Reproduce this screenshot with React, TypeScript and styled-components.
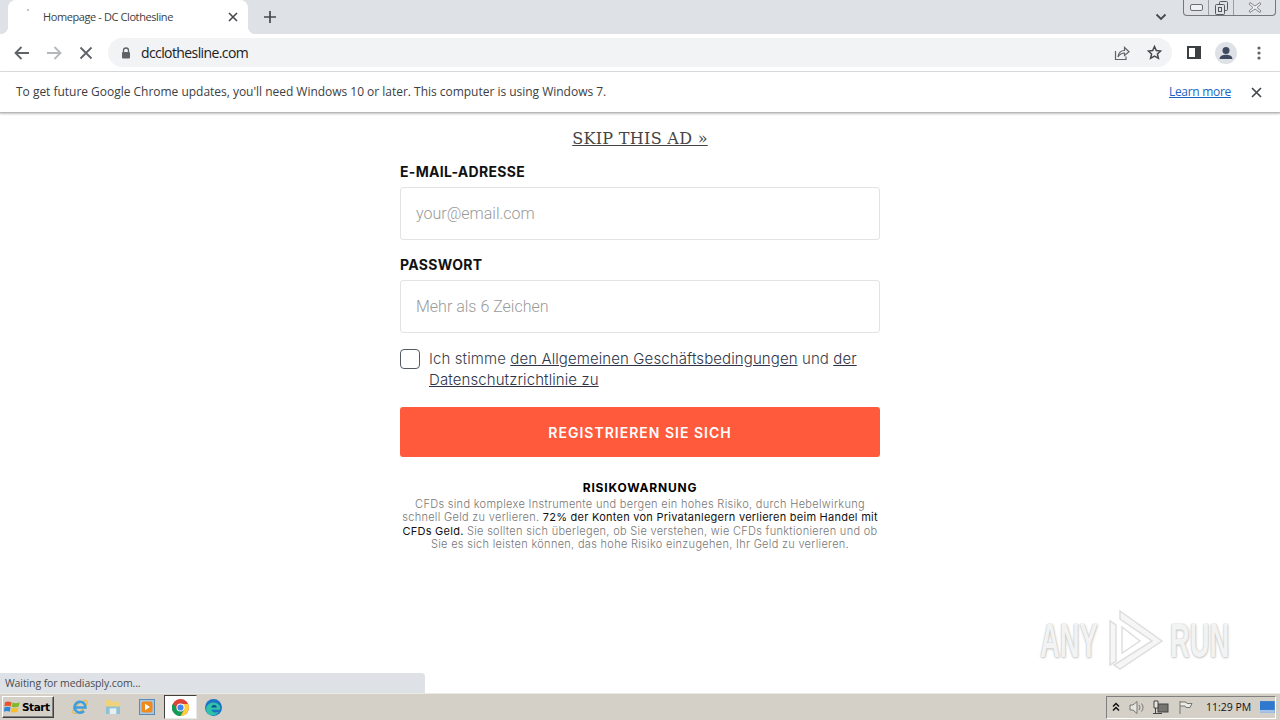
import styled, { createGlobalStyle } from "styled-components"

const GlobalStyle = createGlobalStyle`
    html, body {
        margin: 0;
        padding: 0;
        height: 100%;
        background: #fff;
        overflow: hidden;
    }
    #root { height: 100%; }
    * { box-sizing: border-box; }
`;

const Screen = styled.div`
    position: relative;
    width: 1280px;
    height: 720px;
    display: flex;
    flex-direction: column;
    font-family: "Open Sans", "Liberation Sans", sans-serif;
    overflow: hidden;
`;

/* ---------- browser chrome ---------- */

const TabStrip = styled.div`
    height: 34px;
    flex: none;
    background: #dee1e6;
    display: flex;
    align-items: flex-end;
    padding-left: 8px;
    position: relative;
`;

const Tab = styled.div`
    width: 240px;
    height: 34px;
    background: #fff;
    border-radius: 8px 8px 0 0;
    display: flex;
    align-items: center;
    padding: 0 10px 0 35px;
    position: relative;

    &::before, &::after {
        content: "";
        position: absolute;
        bottom: 0;
        width: 8px;
        height: 8px;
    }
    &::before {
        left: -8px;
        background: radial-gradient(circle at 0 0, #dee1e6 8px, #fff 8.5px);
    }
    &::after {
        right: -8px;
        background: radial-gradient(circle at 100% 0, #dee1e6 8px, #fff 8.5px);
    }
`;

const Favicon = styled.span`
    position: absolute;
    left: 19px;
    top: 9px;
    width: 2px;
    height: 2px;
    background: #c4c4c4;
`;

const TabTitle = styled.span`
    flex: 1;
    margin-bottom: 2px;
    font-size: 11px;
    letter-spacing: -0.4px;
    color: #3c4043;
`;

const NewTab = styled.div`
    width: 26px;
    height: 34px;
    margin-left: 9px;
    display: flex;
    align-items: center;
    justify-content: center;
`;

const TabMenu = styled.div`
    position: absolute;
    left: 1153px;
    top: 10px;
    width: 16px;
    height: 14px;
    display: flex;
    align-items: center;
    justify-content: center;
`;

const WindowButtons = styled.div`
    position: absolute;
    left: 1183px;
    top: 0;
    width: 93px;
    height: 16px;
    border: 1px solid #74777c;
    border-top: none;
    border-radius: 0 0 4px 4px;
    display: grid;
    grid-template-columns: 25px 25px 1fr;
`;

const WindowButton = styled.div<{ $divider?: boolean }>`
    display: flex;
    align-items: center;
    justify-content: center;
    border-right: ${(p) => (p.$divider ? "1px solid #9a9da2" : "none")};
`;

const Toolbar = styled.div`
    height: 38px;
    flex: none;
    background: #fff;
    display: flex;
    align-items: center;
    padding-left: 6px;
    border-bottom: 1px solid #dadce0;
`;

const NavButton = styled.div`
    width: 32px;
    height: 32px;
    display: flex;
    align-items: center;
    justify-content: center;
`;

const Omnibox = styled.div`
    width: 1064px;
    height: 29px;
    margin-left: 6px;
    border-radius: 15px;
    background: #f1f3f4;
    display: flex;
    align-items: center;
    padding: 0 2px 0 13px;
`;

const Url = styled.span`
    flex: 1;
    margin-left: 10px;
    font-size: 14px;
    letter-spacing: -0.6px;
    color: #202124;
`;

const OmniIcon = styled.div`
    width: 32px;
    display: flex;
    justify-content: center;
`;

const ToolIcons = styled.div`
    display: flex;
    align-items: center;
    margin-left: 5px;
`;

const ToolIcon = styled.div<{ $w: number }>`
    width: ${(p) => p.$w}px;
    height: 28px;
    display: flex;
    align-items: center;
    justify-content: center;
`;

const Avatar = styled.div`
    width: 22px;
    height: 22px;
    border-radius: 50%;
    background: #dee1e6;
    display: flex;
    align-items: center;
    justify-content: center;
    overflow: hidden;
`;

const InfoBar = styled.div`
    height: 41px;
    flex: none;
    background: #fff;
    display: flex;
    align-items: center;
    padding: 0 18px 0 16px;
    border-bottom: 1px solid #b8b8b8;
    box-shadow: 0 1px 2px rgba(0, 0, 0, 0.25);
    position: relative;
    z-index: 1;
`;

const InfoText = styled.span`
    flex: 1;
    margin-bottom: 2px;
    font-size: 12px;
    letter-spacing: -0.02px;
    color: #3c4043;
`;

const LearnMore = styled.a`
    margin-bottom: 2px;
    margin-right: 20px;
    font-size: 12px;
    letter-spacing: -0.3px;
    color: #1a63c4;
    text-decoration: underline;
`;

/* ---------- page ---------- */

const Page = styled.main`
    flex: 1;
    background: #fff;
    display: flex;
    flex-direction: column;
    align-items: center;
    padding-top: 16px;
`;

const SkipLink = styled.a`
    font-family: "DejaVu Serif", "Liberation Serif", serif;
    font-size: 16px;
    line-height: 20px;
    letter-spacing: 0.3px;
    color: #444;
    text-decoration: underline;
    margin-bottom: 14px;
`;

const Form = styled.form`
    width: 480px;
    display: flex;
    flex-direction: column;
`;

const FieldLabel = styled.label`
    font-family: Inter, sans-serif;
    font-size: 14px;
    line-height: 18px;
    font-weight: 700;
    letter-spacing: 0.3px;
    color: #111;
    margin-bottom: 6px;
`;

const FieldBox = styled.div`
    height: 53px;
    border: 1px solid #e3e3e3;
    border-radius: 3px;
    padding: 0 15px;
    display: flex;
    align-items: center;
    font-family: Roboto, sans-serif;
    font-weight: 300;
    font-size: 16px;
    color: #9a9a9a;
    margin-bottom: 16px;
`;

const AgreeRow = styled.div`
    display: flex;
    gap: 9px;
    margin-bottom: 16px;
`;

const Checkbox = styled.span`
    flex: none;
    width: 20px;
    height: 20px;
    border: 1px solid #555b66;
    border-radius: 4px;
    background: #fff;
`;

const AgreeText = styled.p`
    margin: -1px 0 1px;
    font-family: Inter, sans-serif;
    font-weight: 300;
    font-size: 15px;
    line-height: 21px;
    letter-spacing: 0.1px;
    color: #3a3f4d;
    & a {
        color: #2e3448;
        text-decoration: underline;
    }
`;

const SubmitButton = styled.div`
    height: 50px;
    border-radius: 3px;
    background: #ff5a3c;
    color: #fff;
    display: flex;
    align-items: center;
    justify-content: center;
    font-family: Inter, sans-serif;
    font-size: 14px;
    font-weight: 600;
    letter-spacing: 1px;
`;

const RiskBlock = styled.section`
    margin-top: 24px;
    text-align: center;
`;

const RiskTitle = styled.h4`
    margin: 0 0 3px;
    font-family: Inter, sans-serif;
    font-size: 12px;
    line-height: 14px;
    font-weight: 700;
    letter-spacing: 0.8px;
    color: #000;
`;

const RiskText = styled.p`
    margin: 0;
    font-family: Inter, sans-serif;
    font-weight: 300;
    font-size: 11px;
    line-height: 13.3px;
    letter-spacing: 0.3px;
    color: #777;
    & b {
        font-weight: 400;
        letter-spacing: 0.25px;
        color: #111;
    }
`;

/* ---------- overlays ---------- */

const StatusBubble = styled.div`
    position: absolute;
    left: 0;
    bottom: 27px;
    width: 425px;
    height: 20px;
    background: #dee1e6;
    border-radius: 0 4px 0 0;
    display: flex;
    align-items: center;
    padding-left: 5px;
    font-size: 10.5px;
    letter-spacing: -0.1px;
    color: #4a4d52;
`;

const Watermark = styled.div`
    position: absolute;
    left: 1040px;
    top: 608px;
    height: 64px;
    width: 192px;
    display: flex;
    align-items: center;
    justify-content: space-between;
`;

const WatermarkWord = styled.span`
    width: 62px;
    font-family: "Liberation Sans", sans-serif;
    font-weight: 700;
    font-size: 48px;
    color: #f3f3f3;
    text-shadow: 0 0 2px #b8b8b8, 1px 1px 3px #c8c8c8;
    display: inline-block;
    transform: scaleX(0.57);
    transform-origin: left center;
    white-space: nowrap;
`;

/* ---------- taskbar ---------- */

const Taskbar = styled.footer`
    height: 27px;
    flex: none;
    background: #d4d0c8;
    border-top: 1px solid #eceae4;
    display: flex;
    align-items: center;
    padding-left: 2px;
`;

const StartButton = styled.div`
    width: 52px;
    height: 22px;
    background: #d4d0c8;
    border: 1px solid;
    border-color: #fff #404040 #404040 #fff;
    box-shadow: inset -1px -1px 0 #808080;
    display: flex;
    align-items: center;
    gap: 1px;
    padding-left: 1px;
    font-family: "DejaVu Sans", sans-serif;
    font-weight: 700;
    font-size: 10.5px;
    letter-spacing: -0.45px;
    color: #000;
`;

const QuickLaunch = styled.div`
    display: flex;
    align-items: center;
    margin-left: 9px;
    flex: 1;
`;

const TaskIcon = styled.div<{ $active?: boolean }>`
    width: 33.5px;
    height: 24px;
    display: flex;
    align-items: center;
    justify-content: center;
    background: ${(p) => (p.$active ? "#fff" : "transparent")};
    border: ${(p) => (p.$active ? "1px solid" : "none")};
    border-color: #404040 #e8e8e8 #e8e8e8 #404040;
`;

const Tray = styled.div`
    width: 170px;
    height: 23px;
    margin-right: 4px;
    border: 1px solid;
    border-color: #808080 #fff #fff #808080;
    display: flex;
    align-items: center;
    padding-left: 4px;
`;

const TraySlot = styled.div<{ $w: number }>`
    width: ${(p) => p.$w}px;
    flex: none;
    display: flex;
    align-items: center;
    justify-content: center;
`;

const Clock = styled.span`
    width: 48px;
    margin: 0 8px 0 4px;
    text-align: center;
    white-space: nowrap;
    font-family: "Open Sans", sans-serif;
    font-size: 10.5px;
    color: #111;
`;

function ChromeLogo() {
    return (
        <svg width="17" height="17" viewBox="0 0 16 16">
            <circle cx="8" cy="8" r="8" fill="#db4437" />
            <path d="M8 8 1 12.2A8 8 0 0 1 1.1 4L4.5 9.5Z" fill="#0f9d58" />
            <path d="M1 12A8 8 0 0 0 8 16L11.5 9.5 8 8Z" fill="#0f9d58" />
            <path d="M8 16A8 8 0 0 0 15.2 4.6H8L11.5 10Z" fill="#ffcd40" />
            <circle cx="8" cy="8" r="3.8" fill="#fff" />
            <circle cx="8" cy="8" r="2.9" fill="#4285f4" />
        </svg>
    );
}

function EdgeLogo() {
    return (
        <svg width="17" height="17" viewBox="0 0 16 16">
            <circle cx="8" cy="8" r="8" fill="#1b73c6" />
            <path d="M1 9C2 4 7 2 11 4 14 5.500 15 8 14 10H6C6.500 12.500 10 13.500 13 12 11 15.500 6 16.500 3 14 1.500 12.800 1 11 1 9Z" fill="#2fc2a8" />
            <path d="M6 8C6 6 8 5 10 6 11 6.500 11.200 7.500 11 8Z" fill="#0d4f94" />
        </svg>
    );
}

function IeLogo() {
    return (
        <svg width="18" height="18" viewBox="0 0 18 18">
            <ellipse cx="9" cy="9" rx="9" ry="3.500" transform="rotate(-40 9 9)" fill="none" stroke="#e8b93a" strokeWidth="1.200" />
            <path d="M3.800 9.500H14.500A5.500 5.500 0 1 0 13 13" fill="none" stroke="#3f9ee0" strokeWidth="2.600" />
        </svg>
    );
}

function FolderLogo() {
    return (
        <svg width="16" height="16" viewBox="0 0 17 17">
            <path d="M1 1H7L8 3H16V16H1Z" fill="#f0d27a" />
            <rect x="1" y="8" width="15" height="8" fill="#8fc1d6" />
            <rect x="5" y="10" width="7" height="6" fill="#e8eef0" />
        </svg>
    );
}

function PlayerLogo() {
    return (
        <svg width="16" height="16" viewBox="0 0 16 16">
            <rect x="0.500" y="0.500" width="15" height="15" fill="#a9c6e0" stroke="#5d8ab5" />
            <rect x="2.500" y="2.500" width="11" height="11" rx="2" fill="#ef8a1d" />
            <path d="M6 4.800 11 8 6 11.200Z" fill="#fff" />
        </svg>
    );
}

function WindowsFlag() {
    return (
        <svg width="17" height="16" viewBox="0 0 18 16">
            <path d="M1 3C3 1.800 5 1.800 8 3L7 7.500C5 6.500 3 6.500 0.500 7.500Z" fill="#e8552a" />
            <path d="M9 3.200C11.500 4.300 13.500 4.200 16.500 3L15.500 7.500C13 8.500 10.500 8.500 8 7.700Z" fill="#7db928" />
            <path d="M0.300 8.500C3 7.500 5 7.500 7 8.500L6 13C4 12 2 12 0 13Z" fill="#2f87d8" />
            <path d="M8 8.800C10 9.600 12.500 9.600 15.300 8.500L14.300 13C12 14 9.500 14 7 13.200Z" fill="#f5c02c" />
        </svg>
    );
}

function AnyRunMark() {
    return (
        <svg width="56" height="62" viewBox="0 0 56 62">
            <g fill="#f6f6f6" stroke="#dedede" strokeWidth="1.500">
                <path d="M2 12V56L8 52V16Z" />
                <path d="M12 2 54 32 12 60 6 56 44 32 12 10Z" />
                <path d="M14 18 32 32 14 44Z" fill="#fff" />
            </g>
        </svg>
    );
}

export default function App() {
    return (
        <>
            <GlobalStyle />
            <Screen>
                <TabStrip>
                    <Tab>
                        <Favicon />
                        <TabTitle>Homepage - DC Clothesline</TabTitle>
                        <svg width="10" height="10" viewBox="0 0 10 10">
                            <path d="M1 1 9 9M9 1 1 9" stroke="#45484c" strokeWidth="1.600" />
                        </svg>
                    </Tab>
                    <NewTab>
                        <svg width="12" height="12" viewBox="0 0 12 12">
                            <path d="M6 0V12M0 6H12" stroke="#45484c" strokeWidth="1.700" />
                        </svg>
                    </NewTab>
                    <TabMenu>
                        <svg width="12" height="8" viewBox="0 0 12 8">
                            <path d="M1.500 1.500 6 6 10.500 1.500" fill="none" stroke="#45484c" strokeWidth="1.800" />
                        </svg>
                    </TabMenu>
                    <WindowButtons>
                        <WindowButton $divider>
                            <svg width="13" height="7" viewBox="0 0 13 7">
                                <rect x="0.500" y="0.500" width="12" height="6" rx="1.500" fill="#eef0f3" stroke="#6b6e73" />
                            </svg>
                        </WindowButton>
                        <WindowButton $divider>
                            <svg width="13" height="14" viewBox="0 0 13 14">
                                <rect x="4.500" y="0.500" width="8" height="9" rx="1" fill="#dee1e6" stroke="#55585c" />
                                <rect x="0.500" y="3.500" width="9" height="10" rx="1" fill="#dee1e6" stroke="#55585c" />
                                <rect x="3.500" y="6.500" width="3" height="4" fill="none" stroke="#55585c" />
                            </svg>
                        </WindowButton>
                        <WindowButton>
                            <svg width="14" height="11" viewBox="0 0 14 11">
                                <path d="M2 0.500 7 4 12 0.500 13 2 9 5.500 13 9 12 10.500 7 7 2 10.500 1 9 5 5.500 1 2Z" fill="#eef0f3" stroke="#6b6e73" strokeWidth="0.800" />
                            </svg>
                        </WindowButton>
                    </WindowButtons>
                </TabStrip>

                <Toolbar>
                    <NavButton>
                        <svg width="16" height="14" viewBox="0 0 16 14">
                            <path d="M15 7H2M7.500 1 1.500 7 7.500 13" fill="none" stroke="#5f6368" strokeWidth="1.800" />
                        </svg>
                    </NavButton>
                    <NavButton>
                        <svg width="16" height="14" viewBox="0 0 16 14">
                            <path d="M1 7H14M8.500 1 14.500 7 8.500 13" fill="none" stroke="#b4b7bb" strokeWidth="1.800" />
                        </svg>
                    </NavButton>
                    <NavButton>
                        <svg width="14" height="14" viewBox="0 0 14 14">
                            <path d="M1.500 1.500 12.500 12.500M12.500 1.500 1.500 12.500" stroke="#5f6368" strokeWidth="1.800" />
                        </svg>
                    </NavButton>
                    <Omnibox>
                        <svg width="10" height="12" viewBox="0 0 10 12">
                            <path d="M2.500 5V3.500a2.500 2.500 0 0 1 5 0V5" fill="none" stroke="#5f6368" strokeWidth="1.300" />
                            <rect x="1" y="5" width="8" height="6.500" rx="1" fill="#5f6368" />
                        </svg>
                        <Url>dcclothesline.com</Url>
                        <OmniIcon>
                            <svg width="16" height="16" viewBox="0 0 16 16">
                                <path d="M1.500 6V14.500H12V11.500" fill="none" stroke="#5f6368" strokeWidth="1.200" />
                                <path d="M4 12C4.500 8 7 5.500 10.500 5.500V2.500L15 6.800 10.500 10.500V8C8 8 5.500 9.500 4 12Z" fill="none" stroke="#5f6368" strokeWidth="1.200" />
                            </svg>
                        </OmniIcon>
                        <OmniIcon>
                            <svg width="15" height="15" viewBox="0 0 15 15">
                                <path d="M7.500 1.500 9.300 5.500 13.700 6 10.400 8.900 11.400 13.300 7.500 11 3.600 13.300 4.600 8.900 1.300 6 5.700 5.500Z" fill="none" stroke="#45484c" strokeWidth="1.500" />
                            </svg>
                        </OmniIcon>
                    </Omnibox>
                    <ToolIcons>
                        <ToolIcon $w={33}>
                            <svg width="14" height="13" viewBox="0 0 14 13">
                                <rect x="1" y="1" width="12" height="11" fill="#fff" stroke="#3c4043" strokeWidth="2" />
                                <rect x="8" y="1" width="5" height="11" fill="#3c4043" />
                            </svg>
                        </ToolIcon>
                        <ToolIcon $w={31}>
                            <Avatar>
                                <svg width="22" height="22" viewBox="0 0 22 22">
                                    <circle cx="11" cy="8.500" r="3.500" fill="#3f4a60" />
                                    <path d="M4.500 17C5 13.500 8 12.800 11 12.800S17 13.500 17.500 17Z" fill="#3f4a60" />
                                </svg>
                            </Avatar>
                        </ToolIcon>
                        <ToolIcon $w={36}>
                            <svg width="4" height="14" viewBox="0 0 4 14">
                                <circle cx="2" cy="2" r="1.600" fill="#5f6368" />
                                <circle cx="2" cy="7" r="1.600" fill="#5f6368" />
                                <circle cx="2" cy="12" r="1.600" fill="#5f6368" />
                            </svg>
                        </ToolIcon>
                    </ToolIcons>
                </Toolbar>

                <InfoBar>
                    <InfoText>To get future Google Chrome updates, you'll need Windows 10 or later. This computer is using Windows 7.</InfoText>
                    <LearnMore>Learn more</LearnMore>
                    <svg width="11" height="11" viewBox="0 0 11 11">
                        <path d="M1 1 10 10M10 1 1 10" stroke="#45484c" strokeWidth="1.700" />
                    </svg>
                </InfoBar>

                <Page>
                    <SkipLink>SKIP THIS AD »</SkipLink>
                    <Form>
                        <FieldLabel>E-MAIL-ADRESSE</FieldLabel>
                        <FieldBox>your@email.com</FieldBox>
                        <FieldLabel>PASSWORT</FieldLabel>
                        <FieldBox>Mehr als 6 Zeichen</FieldBox>
                        <AgreeRow>
                            <Checkbox />
                            <AgreeText>
                                Ich stimme <a>den Allgemeinen Geschäftsbedingungen</a> und <a>der</a> <a>Datenschutzrichtlinie zu</a>
                            </AgreeText>
                        </AgreeRow>
                        <SubmitButton>REGISTRIEREN SIE SICH</SubmitButton>
                        <RiskBlock>
                            <RiskTitle>RISIKOWARNUNG</RiskTitle>
                            <RiskText>
                                CFDs sind komplexe Instrumente und bergen ein hohes Risiko, durch Hebelwirkung schnell Geld zu verlieren. <b>72% der Konten von Privatanlegern verlieren beim Handel mit CFDs Geld.</b> Sie sollten sich überlegen, ob Sie verstehen, wie CFDs funktionieren und ob Sie es sich leisten können, das hohe Risiko einzugehen, Ihr Geld zu verlieren.
                            </RiskText>
                        </RiskBlock>
                    </Form>
                </Page>

                <Taskbar>
                    <StartButton>
                        <WindowsFlag />
                        Start
                    </StartButton>
                    <QuickLaunch>
                        <TaskIcon><IeLogo /></TaskIcon>
                        <TaskIcon><FolderLogo /></TaskIcon>
                        <TaskIcon><PlayerLogo /></TaskIcon>
                        <TaskIcon $active><ChromeLogo /></TaskIcon>
                        <TaskIcon><EdgeLogo /></TaskIcon>
                    </QuickLaunch>
                    <Tray>
                        <TraySlot $w={10}>
                            <svg width="8" height="10" viewBox="0 0 8 10">
                                <path d="M1 4.500 4 1.500 7 4.500M1 8.500 4 5.500 7 8.500" fill="none" stroke="#111" strokeWidth="1.500" />
                            </svg>
                        </TraySlot>
                        <TraySlot $w={32}>
                            <svg width="16" height="15" viewBox="0 0 16 15">
                                <path d="M1 5H4L8 1.500V13.500L4 10H1Z" fill="#e8e6e0" stroke="#77756f" />
                                <path d="M10 5C11 6.500 11 8.500 10 10M12.500 3.500C14.500 6 14.500 9 12.500 11.500" fill="none" stroke="#77756f" />
                            </svg>
                        </TraySlot>
                        <TraySlot $w={16}>
                            <svg width="16" height="15" viewBox="0 0 16 15">
                                <rect x="5" y="4" width="10" height="8" fill="#77756f" stroke="#444" />
                                <path d="M1 1H5V8H1ZM2.500 8V13M0 13.500H9" fill="#e8e6e0" stroke="#444" />
                            </svg>
                        </TraySlot>
                        <TraySlot $w={32}>
                            <svg width="15" height="15" viewBox="0 0 15 15">
                                <path d="M2 1V14M2 2H8L9 3.500H14L12 7.500H8L7 6H2" fill="#eceae4" stroke="#77756f" />
                            </svg>
                        </TraySlot>
                        <Clock>11:29 PM</Clock>
                        <svg width="15" height="12" viewBox="0 0 15 12">
                            <rect width="15" height="12" fill="#2f78d0" />
                            <rect y="9" width="15" height="3" fill="#a7c4e6" />
                        </svg>
                    </Tray>
                </Taskbar>

                <StatusBubble>Waiting for mediasply.com...</StatusBubble>

                <Watermark>
                    <WatermarkWord>ANY</WatermarkWord>
                    <AnyRunMark />
                    <WatermarkWord>RUN</WatermarkWord>
                </Watermark>
            </Screen>
        </>
    );
}
